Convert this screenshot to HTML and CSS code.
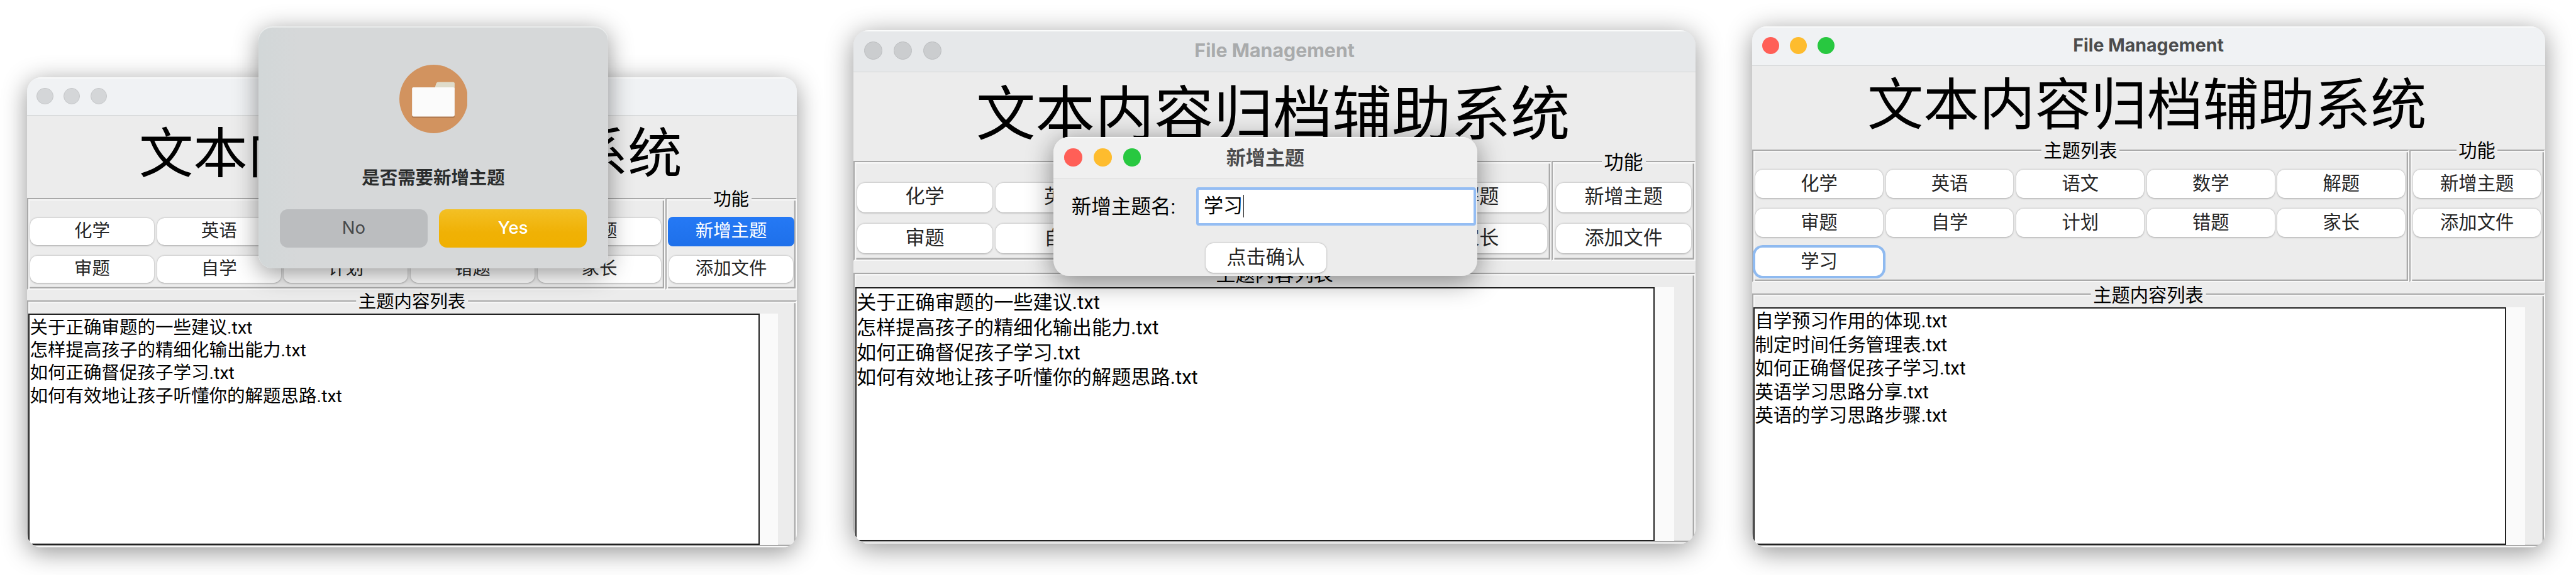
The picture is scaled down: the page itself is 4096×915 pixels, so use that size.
FILE: index.html
```html
<!DOCTYPE html>
<html lang="zh-CN">
<head>
<meta charset="utf-8">
<title>File Management</title>
<link rel="stylesheet" href="styles.css">
</head>
<body>
<main class="desktop">

  <div class="scene scene-confirm">
    <section class="window">
      <header class="titlebar">
        <span class="lights lights-off"><i></i><i></i><i></i></span>
      </header>
      <h1 class="heading">文本内容归档辅助系统</h1>
      <div class="panels">
        <div class="frame topics">
          <button class="btn">化学</button><button class="btn">英语</button><button class="btn">语文</button><button class="btn">数学</button><button class="btn">解题</button>
          <button class="btn">审题</button><button class="btn">自学</button><button class="btn">计划</button><button class="btn">错题</button><button class="btn">家长</button>
        </div>
        <div class="frame actions">
          <span class="legend">功能</span>
          <button class="btn btn-pressed">新增主题</button>
          <button class="btn">添加文件</button>
        </div>
      </div>
      <div class="frame content">
        <span class="legend">主题内容列表</span>
        <ul class="files">
          <li>关于正确审题的一些建议.txt</li>
          <li>怎样提高孩子的精细化输出能力.txt</li>
          <li>如何正确督促孩子学习.txt</li>
          <li>如何有效地让孩子听懂你的解题思路.txt</li>
        </ul>
        <div class="scrollbar"></div>
      </div>
    </section>
    <section class="alert">
      <svg class="alert-icon" viewBox="0 0 119 119">
        <circle cx="59.5" cy="59.5" r="59.5" fill="#d2935f"/>
        <path d="M61 42 L64 32.5 Q65 30 68 30 H93 Q96 30 96 33 V44 H61Z" fill="#dfdccb"/>
        <rect x="22" y="42" width="74" height="50.5" rx="2.5" fill="#b07a50"/>
        <rect x="22" y="39.4" width="74" height="50.6" rx="2.5" fill="#fbfbfb"/>
      </svg>
      <p class="alert-text">是否需要新增主题</p>
      <div class="alert-buttons">
        <button class="alert-btn">No</button>
        <button class="alert-btn alert-yes">Yes</button>
      </div>
    </section>
  </div>

  <div class="scene scene-input">
    <section class="window">
      <header class="titlebar titlebar-dim">
        <span class="lights lights-off"><i></i><i></i><i></i></span>
        <span class="title">File Management</span>
      </header>
      <h1 class="heading">文本内容归档辅助系统</h1>
      <div class="panels">
        <div class="frame topics">
          <button class="btn">化学</button><button class="btn">英语</button><button class="btn">语文</button><button class="btn">数学</button><button class="btn">解题</button>
          <button class="btn">审题</button><button class="btn">自学</button><button class="btn">计划</button><button class="btn">错题</button><button class="btn">家长</button>
        </div>
        <div class="frame actions">
          <span class="legend">功能</span>
          <button class="btn">新增主题</button>
          <button class="btn">添加文件</button>
        </div>
      </div>
      <div class="frame content">
        <span class="legend">主题内容列表</span>
        <ul class="files">
          <li>关于正确审题的一些建议.txt</li>
          <li>怎样提高孩子的精细化输出能力.txt</li>
          <li>如何正确督促孩子学习.txt</li>
          <li>如何有效地让孩子听懂你的解题思路.txt</li>
        </ul>
        <div class="scrollbar"></div>
      </div>
    </section>
    <section class="prompt">
      <header class="titlebar titlebar-prompt">
        <span class="lights"><i></i><i></i><i></i></span>
        <span class="title">新增主题</span>
      </header>
      <div class="prompt-row">
        <span class="prompt-label">新增主题名:</span>
        <div class="field"><span class="field-text">学习</span></div>
      </div>
      <button class="btn prompt-ok">点击确认</button>
    </section>
  </div>

  <div class="scene scene-result">
    <section class="window">
      <header class="titlebar">
        <span class="lights"><i></i><i></i><i></i></span>
        <span class="title">File Management</span>
      </header>
      <h1 class="heading">文本内容归档辅助系统</h1>
      <div class="panels">
        <div class="frame topics">
          <span class="legend">主题列表</span>
          <button class="btn">化学</button><button class="btn">英语</button><button class="btn">语文</button><button class="btn">数学</button><button class="btn">解题</button>
          <button class="btn">审题</button><button class="btn">自学</button><button class="btn">计划</button><button class="btn">错题</button><button class="btn">家长</button>
          <button class="btn btn-focus">学习</button>
        </div>
        <div class="frame actions">
          <span class="legend">功能</span>
          <button class="btn">新增主题</button>
          <button class="btn">添加文件</button>
        </div>
      </div>
      <div class="frame content">
        <span class="legend">主题内容列表</span>
        <ul class="files">
          <li>自学预习作用的体现.txt</li>
          <li>制定时间任务管理表.txt</li>
          <li>如何正确督促孩子学习.txt</li>
          <li>英语学习思路分享.txt</li>
          <li>英语的学习思路步骤.txt</li>
        </ul>
        <div class="scrollbar"></div>
      </div>
    </section>
  </div>

</main>
</body>
</html>
```

FILE: styles.css
```css
* { box-sizing: border-box; }

body {
  margin: 0;
  background: #fff;
  color: #000;
  font-family: Roboto, "Noto Sans CJK SC", sans-serif;
}

.desktop {
  position: relative;
  width: 4096px;
  height: 915px;
  overflow: hidden;
}

/* The three desktop windows, each shown at its own scale */
.scene { position: absolute; }
.scene-confirm { left: 42.5px; top: 123px; }
.scene-input { left: 1357px; top: 47.5px; }
.scene-result { left: 2785.5px; top: 41.5px; }
.scene-confirm > * { zoom: 0.8887; }
.scene-input > * { zoom: 0.9716; }
.scene-result > * { zoom: 0.9149; }

.window {
  display: flex;
  flex-direction: column;
  width: 1378.4px;
  height: 841.5px;
  overflow: hidden;
  border-radius: 25px;
  background: #ececec;
  box-shadow: 0 8px 44px rgba(0, 0, 0, 0.42);
}
.scene-result .window { height: 907px; }

.titlebar {
  position: relative;
  display: flex;
  flex: none;
  align-items: center;
  justify-content: center;
  height: 69px;
  background: #f0f2f4;
  border-bottom: 2px solid #d3d5d6;
  box-shadow: inset 0 2px 0 #fafbfb;
}
.titlebar-dim { background: #e6e8ea; }
.titlebar-prompt { background: #f0f0f0; border-bottom-color: #dcdcdc; }

.title {
  font: 700 31.2px/40px Inter, "Noto Sans CJK SC", sans-serif;
  color: #4b4c4d;
}
.titlebar-dim .title { color: #a9abac; }
.titlebar-prompt .title { font-size: 32px; }

.lights {
  position: absolute;
  left: 18px;
  top: 19px;
  display: flex;
  gap: 18.6px;
}
.lights i {
  width: 29.5px;
  height: 29.5px;
  border-radius: 50%;
  background: #ff5f57;
}
.lights i:nth-child(2) { background: #febc2e; }
.lights i:nth-child(3) { background: #28c840; }
.lights-off i,
.lights-off i:nth-child(n) {
  background: #d4d6d8;
  border: 1.5px solid #c4c6c8;
}
.titlebar-dim .lights i { background: #cbcdcf; border-color: #bcbec0; }

.heading {
  flex: none;
  height: 145.6px;
  margin: 0;
  padding-right: 5px;
  font-size: 97.2px;
  font-weight: 400;
  line-height: 139px;
  text-align: center;
}
.scene-confirm .heading { height: 147px; }

/* Etched frame: a grey line with a white one beside it */
.frame {
  position: relative;
  border: 2.5px solid;
  border-color: #a9a9a9 #f8f8f8 #f8f8f8 #a9a9a9;
  box-shadow: inset 2.5px 2.5px 0 #f6f6f6, inset -2.5px -2.5px 0 #a9a9a9;
}
.legend {
  position: absolute;
  top: -18px;
  left: 50%;
  transform: translateX(-50%);
  padding: 0 4px;
  background: #ececec;
  font-size: 32px;
  line-height: 38px;
  white-space: nowrap;
}

.panels {
  display: flex;
  flex: none;
  height: 164px;
  margin-bottom: 19.5px;
}
.scene-result .panels { height: 231px; }

.topics {
  display: grid;
  grid-template-columns: repeat(5, 221.6px);
  grid-auto-rows: 48.6px;
  gap: 19px 5.3px;
  width: 1142.4px;
  padding: 33.5px 0 0 4px;
}
.actions {
  display: flex;
  flex: 1;
  flex-direction: column;
  gap: 19px;
  padding: 33.5px 5px 0;
}

.btn {
  height: 48.6px;
  padding: 0 0 1px;
  border: 0;
  border-radius: 13px;
  background: #fff;
  box-shadow: 0 1px 3px rgba(0, 0, 0, 0.3);
  color: #262626;
  font: 400 32px/44px Roboto, "Noto Sans CJK SC", sans-serif;
  text-align: center;
}
.btn-pressed {
  height: 53px;
  margin: -2.2px -2px;
  border-radius: 9px;
  background: linear-gradient(#2579f5, #1e70ea);
  box-shadow: none;
  color: #fff;
}
.btn-focus { box-shadow: 0 0 0 4.5px #8fbaf0; }

.content {
  display: flex;
  flex: 1;
  padding: 21.8px 0 2px 1px;
}
.files {
  width: 1308px;
  margin: 0;
  padding: 2.5px 0 0;
  border: 2.5px solid #222;
  background: #fff;
  list-style: none;
  font-size: 32.1px;
  line-height: 41px;
}
.files li { height: 41px; white-space: nowrap; }
.scrollbar { width: 32.5px; background: #fafafa; }

/* Confirmation alert */
.alert {
  position: absolute;
  left: 414.5px;
  top: -91.5px;
  display: flex;
  flex-direction: column;
  align-items: center;
  width: 626px;
  height: 433.7px;
  padding-top: 68.5px;
  border-radius: 25px;
  background: linear-gradient(90deg, #d2d7d8, #d6d8d9 12%, #d6d8d9);
  box-shadow: inset 0 2px 1px #eceeee, 0 8px 44px rgba(0, 0, 0, 0.42);
}
.alert-icon { width: 122.6px; height: 122.6px; }
.alert-text {
  margin: 59.5px 0 31.7px;
  color: #2b2d2d;
  font-size: 32px;
  font-weight: 700;
  line-height: 46px;
}
.alert-buttons { display: flex; gap: 20.5px; }
.alert-btn {
  width: 264.5px;
  height: 68px;
  padding: 0 0 1px;
  border: 0;
  border-radius: 14px;
  background: #bbbdbf;
  color: #47494a;
  font: 400 31px/40px Inter, sans-serif;
}
.alert-yes {
  background: linear-gradient(#f3c025, #f0b105 60%, #f0b000);
  color: #fff;
  font-weight: 500;
}

/* Prompt window */
.prompt {
  position: absolute;
  left: 327.2px;
  top: 175.5px;
  width: 693.8px;
  height: 227px;
  overflow: hidden;
  border-radius: 25px;
  background: #ececec;
  box-shadow: 0 8px 44px rgba(0, 0, 0, 0.45);
}
.prompt-row {
  display: flex;
  align-items: center;
  height: 62.6px;
  margin: 13.4px 2.3px 29px 29.7px;
}
.prompt-label {
  width: 204.3px;
  padding-top: 4px;
  font-size: 32.5px;
  line-height: 44px;
  white-space: nowrap;
}
.field {
  display: flex;
  flex: 1;
  align-items: center;
  height: 62.6px;
  padding: 0 0 1px 8px;
  border: 5px solid #94bdf3;
  border-radius: 4px;
  background: #fff;
}
.field-text {
  padding-right: 1px;
  border-right: 2px solid #222;
  font-size: 32px;
  line-height: 38px;
}
.prompt-ok { display: block; width: 197.7px; margin-left: 248.7px; }
```
